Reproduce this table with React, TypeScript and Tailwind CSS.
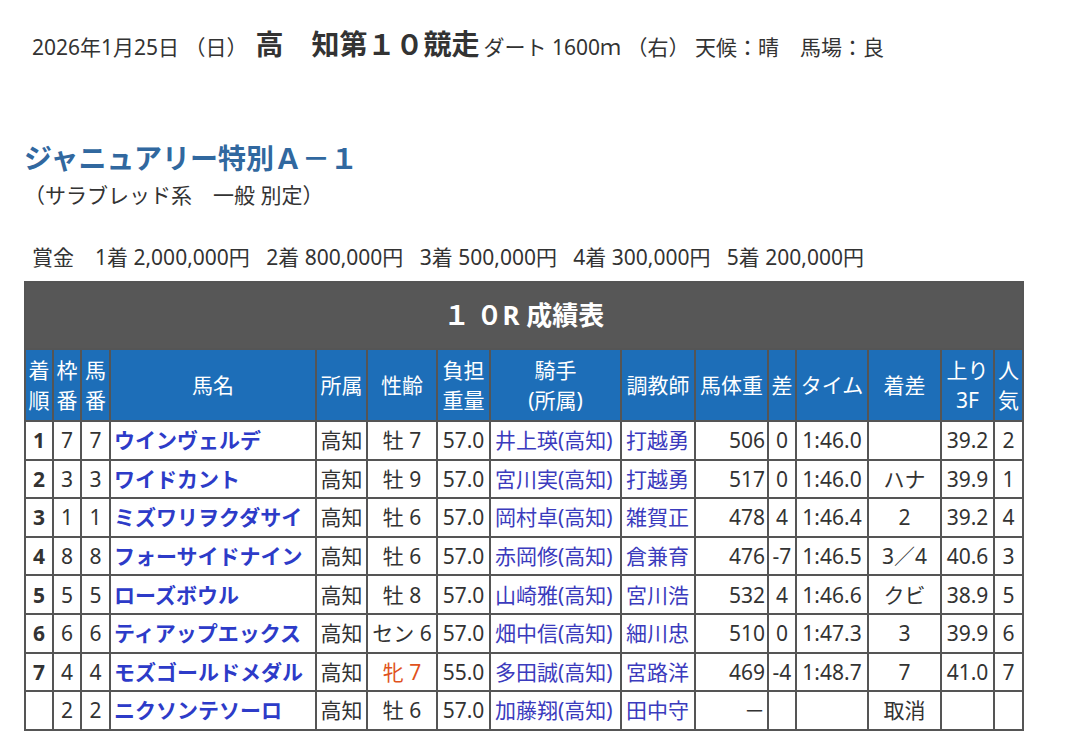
const rows = [
  { rank: '1', waku: '7', uma: '7', name: 'ウインヴェルデ', area: '高知', sex: '牡 7', mare: false, kg: '57.0', jockey: '井上瑛(高知)', trainer: '打越勇', weight: '506', diff: '0', time: '1:46.0', margin: '', last: '39.2', pop: '2' },
  { rank: '2', waku: '3', uma: '3', name: 'ワイドカント', area: '高知', sex: '牡 9', mare: false, kg: '57.0', jockey: '宮川実(高知)', trainer: '打越勇', weight: '517', diff: '0', time: '1:46.0', margin: 'ハナ', last: '39.9', pop: '1' },
  { rank: '3', waku: '1', uma: '1', name: 'ミズワリヲクダサイ', area: '高知', sex: '牡 6', mare: false, kg: '57.0', jockey: '岡村卓(高知)', trainer: '雑賀正', weight: '478', diff: '4', time: '1:46.4', margin: '2', last: '39.2', pop: '4' },
  { rank: '4', waku: '8', uma: '8', name: 'フォーサイドナイン', area: '高知', sex: '牡 6', mare: false, kg: '57.0', jockey: '赤岡修(高知)', trainer: '倉兼育', weight: '476', diff: '-7', time: '1:46.5', margin: '3／4', last: '40.6', pop: '3' },
  { rank: '5', waku: '5', uma: '5', name: 'ローズボウル', area: '高知', sex: '牡 8', mare: false, kg: '57.0', jockey: '山崎雅(高知)', trainer: '宮川浩', weight: '532', diff: '4', time: '1:46.6', margin: 'クビ', last: '38.9', pop: '5' },
  { rank: '6', waku: '6', uma: '6', name: 'ティアップエックス', area: '高知', sex: 'セン 6', mare: false, kg: '57.0', jockey: '畑中信(高知)', trainer: '細川忠', weight: '510', diff: '0', time: '1:47.3', margin: '3', last: '39.9', pop: '6' },
  { rank: '7', waku: '4', uma: '4', name: 'モズゴールドメダル', area: '高知', sex: '牝 7', mare: true, kg: '55.0', jockey: '多田誠(高知)', trainer: '宮路洋', weight: '469', diff: '-4', time: '1:48.7', margin: '7', last: '41.0', pop: '7' },
  { rank: '', waku: '2', uma: '2', name: 'ニクソンテソーロ', area: '高知', sex: '牡 6', mare: false, kg: '57.0', jockey: '加藤翔(高知)', trainer: '田中守', weight: '－', diff: '', time: '', margin: '取消', last: '', pop: '' },
]

// column widths in px, taken from the screenshot
const widths = [28, 28, 29, 206, 51, 70, 53, 131, 74, 73, 28, 72, 73, 53, 29]

export default function App() {
  const th = 'border border-[#555] bg-[#1d6eb8] text-white font-normal text-center leading-[30px] px-0'
  const td = 'border border-[#555] bg-white px-0 whitespace-nowrap'

  return (
    <div
      className="bg-white min-h-[741px] w-[1080px] pt-[28px] pl-[24px] text-[#333]"
      style={{ fontFamily: '"Noto Sans", "Noto Sans CJK JP", sans-serif' }}
    >
      <div className="h-[32px] pl-[8px] flex items-baseline whitespace-nowrap text-[21px] leading-[32px]">
        <span>2026年1月25日 （日）</span>
        <span className="ml-[8px] mr-[4px] text-[28px] font-bold">高　知第１０競走</span>
        <span>ダート 1600ｍ （右） 天候：晴　馬場：良</span>
      </div>

      <h1 className="mt-[80px] h-[36px] leading-[36px] text-[28px] font-bold text-[#31689f] whitespace-nowrap">
        ジャニュアリー特別Ａ－１
      </h1>
      <p className="mt-[5px] h-[28px] leading-[28px] text-[21px] whitespace-nowrap">（サラブレッド系　一般 別定）</p>

      <p className="mt-[34px] h-[28px] leading-[28px] pl-[8px] text-[21px] whitespace-nowrap">
        賞金　1着 2,000,000円&nbsp;&nbsp; 2着 800,000円&nbsp;&nbsp; 3着 500,000円&nbsp;&nbsp; 4着 300,000円&nbsp;&nbsp; 5着 200,000円
      </p>

      <table className="mt-[10px] w-[998px] table-fixed border-separate border-spacing-0 border border-[#555] text-[21px]">
        <colgroup>
          {widths.map((w, i) => (
            <col key={i} style={{ width: w }} />
          ))}
        </colgroup>
        <thead>
          <tr className="h-[67px]">
            <th colSpan={15} className="border border-[#555] bg-[#575757] text-white text-[26px] font-bold text-center">
              １ ０R 成績表
            </th>
          </tr>
          <tr className="h-[72px]">
            <th className={th}>着<br />順</th>
            <th className={th}>枠<br />番</th>
            <th className={th}>馬<br />番</th>
            <th className={th}>馬名</th>
            <th className={th}>所属</th>
            <th className={th}>性齢</th>
            <th className={th}>負担<br />重量</th>
            <th className={th}>騎手<br />(所属)</th>
            <th className={th}>調教師</th>
            <th className={th}>馬体重</th>
            <th className={th}>差</th>
            <th className={th}>タイム</th>
            <th className={th}>着差</th>
            <th className={th}>上り<br />3F</th>
            <th className={th}>人<br />気</th>
          </tr>
        </thead>
        <tbody>
          {rows.map((r, i) => (
            <tr key={i} className="h-[38.6px] leading-[26px]">
              <td className={`${td} text-center font-bold`}>{r.rank}</td>
              <td className={`${td} text-center`}>{r.waku}</td>
              <td className={`${td} text-center`}>{r.uma}</td>
              <td className={`${td} pl-[3px] font-bold text-[#2d3bc8]`}>{r.name}</td>
              <td className={`${td} text-center`}>{r.area}</td>
              <td className={`${td} text-center ${r.mare ? 'text-[#e0521c]' : ''}`}>{r.sex}</td>
              <td className={`${td} text-center`}>{r.kg}</td>
              <td className={`${td} pl-[4px] text-[#3b3bbd]`}>{r.jockey}</td>
              <td className={`${td} pl-[4px] text-[#3b3bbd]`}>{r.trainer}</td>
              <td className={`${td} text-right pr-[2px]`}>{r.weight}</td>
              <td className={`${td} text-center`}>{r.diff}</td>
              <td className={`${td} text-center`}>{r.time}</td>
              <td className={`${td} text-center`}>{r.margin}</td>
              <td className={`${td} text-center`}>{r.last}</td>
              <td className={`${td} text-center`}>{r.pop}</td>
            </tr>
          ))}
        </tbody>
      </table>
    </div>
  )
}
